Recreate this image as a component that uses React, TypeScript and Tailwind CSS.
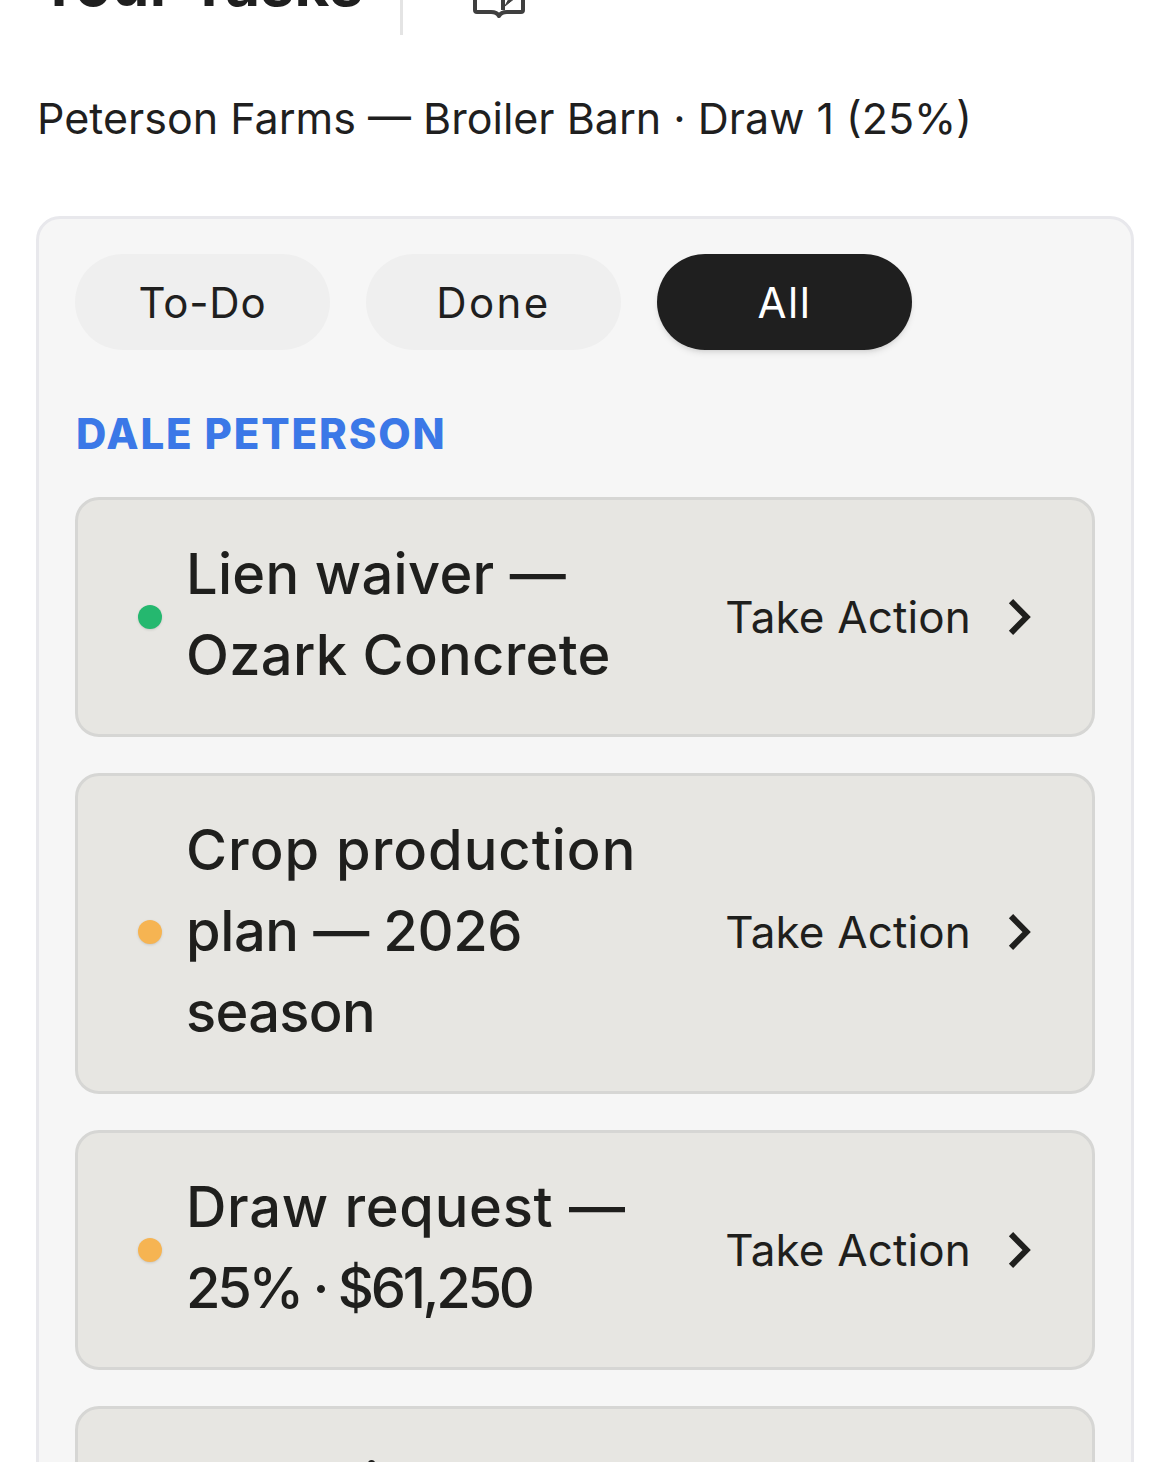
import React from "react";

type Line = { t: string; c: string };

function Chevron() {
  return (
    <svg width="24" height="36" viewBox="0 0 24 36" fill="none" className="shrink-0">
      <path d="M3 2.2 L18.6 18 L3 33.8" stroke="#1f1f1d" strokeWidth="6" />
    </svg>
  );
}

function Task({ lines, dot, box, nudge }: { lines: Line[]; dot: string; box: string; nudge: string }) {
  return (
    <div className={`flex items-center rounded-[24px] border-[3px] border-[#d6d6d4] bg-[#e7e6e2] pl-[60px] pr-[60px] ${box}`}>
      <span className={`h-[24px] w-[24px] shrink-0 rounded-full shadow-sm ${dot}`} />
      <div className={`ml-[24px] flex-1 text-[56px] font-medium leading-[81px] text-[#1f1f1d] ${nudge}`}>
        {lines.map((l) => (
          <div key={l.t} className={`whitespace-nowrap ${l.c}`}>
            {l.t}
          </div>
        ))}
      </div>
      <span className="text-[44px] leading-[60px] tracking-[0.15px] text-[#1f1f1d]">Take Action</span>
      <span className="ml-[37px]">
        <Chevron />
      </span>
    </div>
  );
}

function Tab({ label, track, active }: { label: string; track: string; active?: boolean }) {
  return (
    <div
      className={`flex h-[96px] w-[255px] items-center justify-center rounded-full text-[42px] ${track} ${
        active ? "bg-[#1f1f1f] text-white shadow-md" : "bg-[#efefef] text-[#1f1f1f]"
      }`}
    >
      {label}
    </div>
  );
}

export default function App() {
  return (
    <div className="h-[1462px] w-[1170px] overflow-hidden bg-white font-['Inter',sans-serif]">
      <div className="-mt-[37px] flex h-[72px] items-center pl-[37px]">
        <h1 className="-mt-[30px] w-[363px] text-[60px] font-bold leading-[72px] tracking-[0.4px] text-[#1f1f1f]">
          Your Tasks
        </h1>
        <div className="h-[72px] w-[3px] bg-[#e4e4e4]" />
        <svg width="56" height="56" viewBox="0 0 56 56" fill="none" className="-mt-[7px] ml-[68px]" stroke="#3f3f3f" strokeWidth="4" strokeLinejoin="round">
          <path d="M4 6 V42 Q4 44 6 44 H20 C24 44 27 46 28 48 C29 46 32 44 36 44 H50 Q52 44 52 42 V6 H36 C32 6 29 8 28 12 C27 8 24 6 20 6 Z" />
          <path d="M32 14 V42" />
          <path d="M34 38 L44 30 V20 Z" fill="#3f3f3f" strokeWidth="1" />
        </svg>
      </div>
      <p className="ml-[37px] mt-[53px] text-[43px] leading-[60px] text-[#1f1f1f]">
        Peterson Farms — Broiler Barn · Draw 1 (25%)
      </p>
      <div className="mx-[36px] mt-[68px] h-[1400px] rounded-[24px] border-[3px] border-[#e8e8ec] bg-[#f6f6f6] px-[36px] pt-[35px]">
        <div className="flex gap-[36px]">
          <Tab label="To-Do" track="tracking-[0.8px]" />
          <Tab label="Done" track="tracking-[2.4px]" />
          <Tab label="All" track="tracking-[1.5px]" active />
        </div>
        <h2 className="ml-[1px] mt-[60px] text-[42px] font-extrabold leading-[48px] tracking-[1.85px] text-[#3b78e7]">
          DALE PETERSON
        </h2>
        <div className="mt-[39px] flex flex-col gap-[36px]">
          <Task
            box="py-[36px]"
            nudge="-translate-y-[2px]"
            lines={[
              { t: "Lien waiver —", c: "tracking-[0.3px]" },
              { t: "Ozark Concrete", c: "tracking-[0.3px]" },
            ]}
            dot="bg-[#25b86f]"
          />
          <Task
            box="pt-[34px] pb-[38px]"
            nudge="translate-y-0"
            lines={[
              { t: "Crop production", c: "tracking-[1px]" },
              { t: "plan — 2026", c: "tracking-[-0.4px]" },
              { t: "season", c: "tracking-[-0.7px]" },
            ]}
            dot="bg-[#f6b452]"
          />
          <Task
            box="py-[36px]"
            nudge="-translate-y-[2px]"
            lines={[
              { t: "Draw request —", c: "tracking-[0.7px]" },
              { t: "25% · $61,250", c: "tracking-[-3.3px]" },
            ]}
            dot="bg-[#f6b452]"
          />
          <Task
            box="py-[36px]"
            nudge="-translate-y-[2px]"
            lines={[
              { t: "Surveying —", c: "tracking-[-1.5px]" },
              { t: "Barn site", c: "tracking-[0.3px]" },
            ]}
            dot="bg-[#f6b452]"
          />
        </div>
      </div>
    </div>
  );
}
